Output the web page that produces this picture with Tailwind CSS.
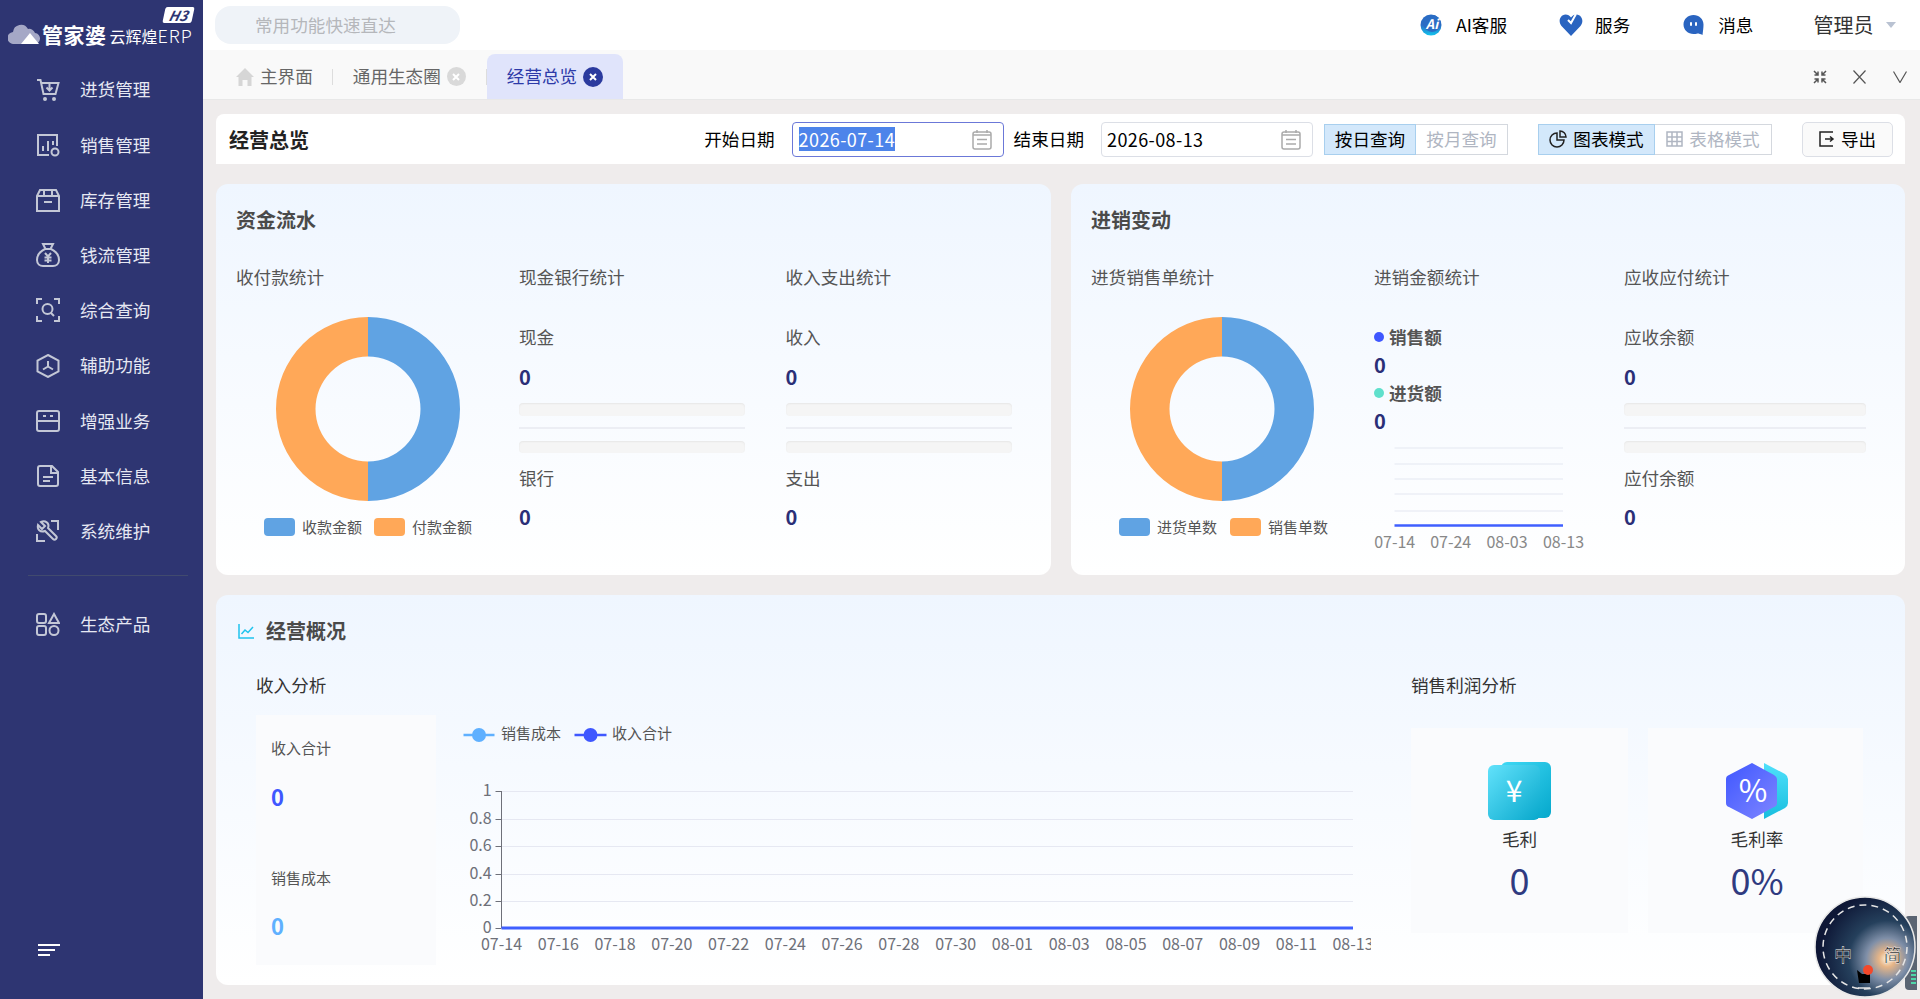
<!DOCTYPE html>
<html lang="zh-CN">

<head>
  <meta charset="UTF-8">
  <meta name="viewport" content="width=device-width, initial-scale=1.0">
  <title>经营总览</title>
  <script src="https://cdn.jsdelivr.net/npm/@tailwindcss/browser@4"></script>
</head>

<body class="h-[999px] overflow-hidden bg-[#efecec] font-['Noto_Sans_CJK_SC','Liberation_Sans',sans-serif] text-[17.6px] text-[#333]">
  <div class="relative flex h-[999px]">

    <!-- Sidebar -->
    <aside class="flex w-[203px] shrink-0 flex-col bg-[#2e3572] text-[#e6e8f2]">
      <!-- Logo -->
      <div class="relative h-[62px]">
        <div class="absolute left-[164px] top-[7px] flex h-[16px] w-[29px] -skew-x-12 items-center justify-center rounded-[2px] bg-white text-[14px] font-bold italic leading-none text-[#2e3572]">H3</div>
        <div class="flex items-center pl-[8px] pt-[22px]">
          <svg class="h-[20px] w-[32px]" viewBox="0 0 32 20"><path d="M6 20a6 6 0 0 1-1-12 8 8 0 0 1 15-3 6 6 0 0 1 7 4 5.500 5.500 0 0 1-1 11z" fill="#a5a8c6"/><path d="M13 20 22 9l9 11z" fill="#fff"/></svg>
          <span class="ml-[2px] text-[21px] font-bold leading-[22px] tracking-[0.5px] text-white">管家婆</span>
          <span class="ml-[3px] mt-[4px] whitespace-nowrap text-[16px] leading-[18px] text-white">云辉煌<span class="text-[18px] font-light tracking-[1px]">ERP</span></span>
        </div>
      </div>

      <!-- Menu -->
      <nav>
        <a class="flex h-[55.2px] items-center pl-[36px]">
          <svg class="h-[24px] w-[24px] fill-none stroke-[#c3c7d6] stroke-2" viewBox="0 0 24 24"><path d="M1 2h3.500l3 14h12l3-11H5"/><path d="M13.500 6v6m-3-2.500 3 3 3-3"/><circle cx="9" cy="21" r="1" /><circle cx="18" cy="21" r="1" /></svg>
          <span class="ml-[20px]">进货管理</span>
        </a>
        <a class="flex h-[55.2px] items-center pl-[36px]">
          <svg class="h-[24px] w-[24px] fill-none stroke-[#c3c7d6] stroke-2" viewBox="0 0 24 24"><path d="M21 13V2H2v20h11"/><path d="M7 13v5M12 8v10M17 8v4"/><circle cx="19" cy="19" r="3.500"/></svg>
          <span class="ml-[20px]">销售管理</span>
        </a>
        <a class="flex h-[55.2px] items-center pl-[36px]">
          <svg class="h-[24px] w-[24px] fill-none stroke-[#c3c7d6] stroke-2" viewBox="0 0 24 24"><path d="M1 8l3-6h16l3 6v15H1z"/><path d="M1 8h22M8 2v6M16 2v6M8 14h8"/></svg>
          <span class="ml-[20px]">库存管理</span>
        </a>
        <a class="flex h-[55.2px] items-center pl-[36px]">
          <svg class="h-[24px] w-[24px] fill-none stroke-[#c3c7d6] stroke-2" viewBox="0 0 24 24"><path d="M7 1h10l-2.500 5h-5z"/><path d="M9 6c-5 2.500-8 7-8 11 0 4 3 6 6 6h10c3 0 6-2 6-6 0-4-3-8.500-8-11"/><path d="M9 10l3 3.500 3-3.500M12 13.500V20M8.500 14.500h7M8.500 17.500h7"/></svg>
          <span class="ml-[20px]">钱流管理</span>
        </a>
        <a class="flex h-[55.2px] items-center pl-[36px]">
          <svg class="h-[24px] w-[24px] fill-none stroke-[#c3c7d6] stroke-2" viewBox="0 0 24 24"><path d="M6 1H1v5M18 1h5v5M6 23H1v-5M18 23h5v-5"/><circle cx="11.500" cy="11" r="5"/><path d="M15 15l3 3"/></svg>
          <span class="ml-[20px]">综合查询</span>
        </a>
        <a class="flex h-[55.2px] items-center pl-[36px]">
          <svg class="h-[24px] w-[24px] fill-none stroke-[#c3c7d6] stroke-2" viewBox="0 0 24 24"><path d="M12 1l10.500 5.500v11L12 23 1.500 17.500v-11z"/><path d="M12 7v5.500M12 12.500l-5 3M12 12.500l5 3"/></svg>
          <span class="ml-[20px]">辅助功能</span>
        </a>
        <a class="flex h-[55.2px] items-center pl-[36px]">
          <svg class="h-[24px] w-[24px] fill-none stroke-[#c3c7d6] stroke-2" viewBox="0 0 24 24"><rect x="1" y="2" width="22" height="20" rx="2"/><path d="M1 12h22M7 7h3M14 7h3"/></svg>
          <span class="ml-[20px]">增强业务</span>
        </a>
        <a class="flex h-[55.2px] items-center pl-[36px]">
          <svg class="h-[24px] w-[24px] fill-none stroke-[#c3c7d6] stroke-2" viewBox="0 0 24 24"><path d="M4 2h12l6 6v12a2 2 0 0 1-2 2H4a2 2 0 0 1-2-2V4a2 2 0 0 1 2-2z"/><path d="M15 2v7h7M7 13h10M7 17h7"/></svg>
          <span class="ml-[20px]">基本信息</span>
        </a>
        <a class="flex h-[55.2px] items-center pl-[36px]">
          <svg class="h-[24px] w-[24px] fill-none stroke-[#c3c7d6] stroke-2" viewBox="0 0 24 24"><path d="M5 3l4 4-3 3-4-4c-1 4 2 8 7 6l8 8c2 2 5-1 3-3l-8-8c2-5-3-8-7-6z"/><path d="M15 2h7v9M1 15v7h8"/></svg>
          <span class="ml-[20px]">系统维护</span>
        </a>
      </nav>
      <div class="ml-[28px] mt-[16px] h-px w-[160px] bg-[#414a6e]"></div>
      <a class="mt-[21px] flex h-[55px] items-center pl-[36px]">
        <svg class="h-[24px] w-[24px] fill-none stroke-[#c3c7d6] stroke-2" viewBox="0 0 24 24"><rect x="1" y="2" width="9" height="9" rx="2"/><rect x="1" y="14" width="9" height="9" rx="2"/><path d="M18 2l5 9H13z"/><circle cx="18" cy="18.500" r="4.500"/></svg>
        <span class="ml-[20px]">生态产品</span>
      </a>
      <div class="ml-[38px] mt-[292px] flex flex-col gap-[3px]">
        <div class="h-[2px] w-[22px] bg-white"></div>
        <div class="h-[2px] w-[17px] bg-white"></div>
        <div class="h-[2px] w-[12px] bg-white"></div>
      </div>
    </aside>

    <div class="flex min-w-0 flex-1 flex-col">
      <!-- Top header -->
      <header class="flex h-[50px] shrink-0 items-center bg-white pl-[12px] text-black">
        <div class="flex h-[38px] w-[245px] items-center rounded-[16px] bg-[#eff3f8] pl-[40px] text-[#b5b7bb]">常用功能快速直达</div>
        <div class="ml-[960px] flex items-center">
          <svg class="h-[24px] w-[22px]" viewBox="0 0 22 24">
            <defs><linearGradient id="aiRing" x1="0" y1="0" x2="0" y2="1"><stop offset="0.5" stop-color="#2a6cc4"/><stop offset="1" stop-color="#12c4ee"/></linearGradient></defs>
            <circle cx="11" cy="12" r="10.500" fill="url(#aiRing)"/><circle cx="12" cy="10.500" r="8.500" fill="#2a6cc4"/>
            <text x="12" y="15.500" text-anchor="middle" font-size="13" font-weight="700" font-style="italic" fill="#fff">Ai</text>
          </svg>
          <span class="ml-[14px]">AI客服</span>
          <svg class="ml-[52px] h-[22px] w-[24px]" viewBox="0 0 24 22"><path d="M12 22 2.500 12C-1 8 .5 1 6.500 .5c2.500 0 4 1 5.500 3C13.500 1.500 15 .5 17.500 .5c6 .5 7.500 7.500 4 11.500z" fill="#2a64c0"/><path d="M9 6l3 3 5-9" fill="none" stroke="#fff" stroke-width="2"/></svg>
          <span class="ml-[12px]">服务</span>
          <svg class="ml-[53px] h-[22px] w-[21px]" viewBox="0 0 21 22"><path d="M10.500 1C16 1 20.500 5 20.500 10.500c0 3-.5 7-1 10.500-2-1-3.500-1.500-5-1.500-1.300.5-2.600.5-4 .5C5 20 .5 16 .5 10.500.5 5 5 1 10.500 1z" fill="#2a64c0"/><rect x="7" y="8" width="2" height="4" rx="1" fill="#fff"/><rect x="12" y="8" width="2" height="4" rx="1" fill="#fff"/></svg>
          <span class="ml-[14px]">消息</span>
          <span class="ml-[60px] text-[20px] leading-[24px] text-[#333]">管理员</span>
          <span class="ml-[13px] h-0 w-0 border-x-[5px] border-t-[6px] border-x-transparent border-t-[#b9c2d2]"></span>
        </div>
      </header>

      <!-- Tabs -->
      <div class="flex h-[50px] shrink-0 items-end border-b border-[#e8e8e8] bg-[#f9f9f9] pl-[33px] text-[#666]">
        <div class="flex h-[45px] items-center">
          <svg class="h-[18px] w-[18px] fill-[#d6d6d6]" viewBox="0 0 18 18"><path d="M9 0l9 9h-2.500v9h-4v-6h-5v6h-4V9H0z"/></svg>
          <span class="ml-[6px]">主界面</span>
          <span class="ml-[19px] h-[16px] w-px bg-[#dddddd]"></span>
          <span class="ml-[20px]">通用生态圈</span>
          <span class="ml-[6px] flex h-[19px] w-[19px] items-center justify-center rounded-full bg-[#d9d9d9]">
            <svg class="h-[8px] w-[8px] stroke-white stroke-2" viewBox="0 0 8 8"><path d="M1 1l6 6M7 1 1 7"/></svg>
          </span>
          <span class="ml-[20px] h-[16px] w-px bg-[#dddddd]"></span>
        </div>
        <div class="flex h-[45px] w-[136px] items-center rounded-t-lg bg-[#e0e4fb] pl-[20px] text-[#2d3aa8]">
          <span>经营总览</span>
          <span class="ml-[6px] flex h-[20px] w-[20px] items-center justify-center rounded-full bg-[#2b3a9e]">
            <svg class="h-[8px] w-[8px] stroke-white stroke-2" viewBox="0 0 8 8"><path d="M1 1l6 6M7 1 1 7"/></svg>
          </span>
        </div>
        <div class="ml-auto flex h-[45px] items-center pr-[13px]">
          <svg class="h-[14px] w-[14px] fill-none stroke-[#555] stroke-[1.500]" viewBox="0 0 14 14"><path d="M1 1l3.500 3.500M13 1 9.500 4.500M1 13l3.500-3.500M13 13 9.500 9.500M5 1.500V5H1.500M9 1.500V5h3.500M5 12.500V9H1.500M9 12.500V9h3.500"/></svg>
          <svg class="ml-[26px] h-[14px] w-[13px] fill-none stroke-[#555] stroke-[1.200]" viewBox="0 0 13 14"><path d="M.5.500l12 13M12.500.500l-12 13"/></svg>
          <svg class="ml-[27px] h-[12px] w-[14px] fill-none stroke-[#555] stroke-[1.200]" viewBox="0 0 14 12"><path d="M.5.500 7 11.500 13.500.500"/></svg>
        </div>
      </div>

      <!-- Page content -->
      <main class="flex min-h-0 flex-1 flex-col pl-[13px] pr-[15px] pt-[14px]">
        <!-- Toolbar -->
        <div class="flex h-[50px] shrink-0 items-center rounded-t-lg bg-white pl-[13px] pr-[12px] text-black">
          <h1 class="pt-[2px] text-[20px] font-bold text-[#222]">经营总览</h1>
          <span class="ml-auto">开始日期</span>
          <div class="ml-[17px] flex h-[35px] w-[212px] items-center justify-between rounded-[4px] border border-[#6b78d8] pl-[6px] pr-[11px]">
            <span class="bg-[#4d84ea] text-[18px] leading-[24px] tracking-[0.4px] text-white">2026-07-14</span>
            <svg class="h-[21px] w-[20px] fill-none stroke-[#aaa] stroke-[1.500]" viewBox="0 0 20 21"><rect x="1" y="3" width="18" height="17" rx="2"/><path d="M5 1v3M15 1v3M1 6h18M5 10.500h10M5 15h10"/></svg>
          </div>
          <span class="ml-[10px]">结束日期</span>
          <div class="ml-[17px] flex h-[35px] w-[212px] items-center justify-between rounded-[4px] border border-[#dcdfe6] pl-[5px] pr-[11px]">
            <span class="text-[18px] tracking-[0.4px]">2026-08-13</span>
            <svg class="h-[21px] w-[20px] fill-none stroke-[#aaa] stroke-[1.500]" viewBox="0 0 20 21"><rect x="1" y="3" width="18" height="17" rx="2"/><path d="M5 1v3M15 1v3M1 6h18M5 10.500h10M5 15h10"/></svg>
          </div>
          <div class="ml-[11px] flex h-[31px]">
            <span class="flex w-[92px] items-center justify-center border border-[#a8cfee] bg-[#d3e8fb]">按日查询</span>
            <span class="flex w-[92px] items-center justify-center border border-l-0 border-[#d4d8de] text-[#b0b6c2]">按月查询</span>
          </div>
          <div class="ml-[30px] flex h-[31px]">
            <span class="flex w-[117px] items-center justify-center gap-[6px] border border-[#a8cfee] bg-[#d3e8fb]">
              <svg class="h-[18px] w-[18px] fill-none stroke-[#222] stroke-[1.500]" viewBox="0 0 18 18"><path d="M8 3a7 7 0 1 0 7 7H8z"/><path d="M11 1a6 6 0 0 1 6 6h-6z"/></svg>
              图表模式
            </span>
            <span class="flex w-[117px] items-center justify-center gap-[6px] border border-l-0 border-[#d4d8de] text-[#b0b6c2]">
              <svg class="h-[16px] w-[17px] fill-none stroke-[#b0b6c2] stroke-[1.500]" viewBox="0 0 17 16"><path d="M1 1h15v14H1zM1 6h15M1 10.500h15M6 1v14M11 1v14"/></svg>
              表格模式
            </span>
          </div>
          <div class="ml-[30px] flex h-[35px] w-[91px] items-center justify-center gap-[6px] rounded-[5px] border border-[#dcdfe6] bg-[#fafafa]">
            <svg class="h-[16px] w-[16px] fill-none stroke-[#222] stroke-[1.500]" viewBox="0 0 16 16"><path d="M14 1H1v14h13M6 8h8M11 5.500 14 8l-3 2.500"/></svg>
            导出
          </div>
        </div>

        <!-- Top cards -->
        <div class="mt-[20px] flex h-[391px] shrink-0 gap-[20px]">
          <section class="h-full w-[835px] rounded-xl bg-gradient-to-b from-[#eff6ff] to-white pl-[20px] pt-[24px] text-[#555]">
            <h2 class="text-[20px] font-bold leading-[24px] text-[#4a4a4a]">资金流水</h2>
            <div class="mt-[33px] grid grid-cols-[283px_266.500px_226px]">
              <div>
                <div class="leading-[24px]">收付款统计</div>
                <svg class="ml-[40px] mt-[28px] block h-[184px] w-[184px]" viewBox="0 0 184 184"><path d="M92 0a92 92 0 0 1 0 184v-39.500a52.500 52.500 0 0 0 0-105z" fill="#60a3e3"/><path d="M92 0a92 92 0 0 0 0 184v-39.500a52.500 52.500 0 0 1 0-105z" fill="#ffa858"/></svg>
                <div class="ml-[28px] mt-[17px] flex items-center text-[15px] leading-[18px]">
                  <span class="h-[18px] w-[31px] rounded-[4px] bg-[#60a3e3]"></span>
                  <span class="ml-[7px]">收款金额</span>
                  <span class="ml-[12px] h-[18px] w-[31px] rounded-[4px] bg-[#ffa858]"></span>
                  <span class="ml-[7px]">付款金额</span>
                </div>
              </div>
              <div>
                <div class="leading-[24px]">现金银行统计</div>
                <div class="mt-[36px] leading-[24px]">现金</div>
                <div class="mt-[16px] text-[20px] font-bold leading-[24px] text-[#2b2f77]">0</div>
                <div class="mt-[14px] h-[13px] w-[226px] rounded-[4px] bg-[#f5f5f5] shadow-[inset_0_1px_2px_rgba(0,0,0,0.06)]"></div>
                <div class="mt-[11px] h-[2px] w-[226px] bg-[#eceef4]"></div>
                <div class="mt-[12px] h-[12px] w-[226px] rounded-[4px] bg-[#f5f5f5] shadow-[inset_0_1px_2px_rgba(0,0,0,0.06)]"></div>
                <div class="mt-[13px] leading-[24px]">银行</div>
                <div class="mt-[15px] text-[20px] font-bold leading-[24px] text-[#2b2f77]">0</div>
              </div>
              <div>
                <div class="leading-[24px]">收入支出统计</div>
                <div class="mt-[36px] leading-[24px]">收入</div>
                <div class="mt-[16px] text-[20px] font-bold leading-[24px] text-[#2b2f77]">0</div>
                <div class="mt-[14px] h-[13px] w-[226px] rounded-[4px] bg-[#f5f5f5] shadow-[inset_0_1px_2px_rgba(0,0,0,0.06)]"></div>
                <div class="mt-[11px] h-[2px] w-[226px] bg-[#eceef4]"></div>
                <div class="mt-[12px] h-[12px] w-[226px] rounded-[4px] bg-[#f5f5f5] shadow-[inset_0_1px_2px_rgba(0,0,0,0.06)]"></div>
                <div class="mt-[13px] leading-[24px]">支出</div>
                <div class="mt-[15px] text-[20px] font-bold leading-[24px] text-[#2b2f77]">0</div>
              </div>
            </div>
          </section>

          <section class="h-full w-[834px] rounded-xl bg-gradient-to-b from-[#eff6ff] to-white pl-[20px] pt-[24px] text-[#555]">
            <h2 class="text-[20px] font-bold leading-[24px] text-[#4a4a4a]">进销变动</h2>
            <div class="mt-[33px] grid grid-cols-[283px_250px_242px]">
              <div>
                <div class="leading-[24px]">进货销售单统计</div>
                <svg class="ml-[39px] mt-[28px] block h-[184px] w-[184px]" viewBox="0 0 184 184"><path d="M92 0a92 92 0 0 1 0 184v-39.500a52.500 52.500 0 0 0 0-105z" fill="#60a3e3"/><path d="M92 0a92 92 0 0 0 0 184v-39.500a52.500 52.500 0 0 1 0-105z" fill="#ffa858"/></svg>
                <div class="ml-[28px] mt-[17px] flex items-center text-[15px] leading-[18px]">
                  <span class="h-[18px] w-[31px] rounded-[4px] bg-[#60a3e3]"></span>
                  <span class="ml-[7px]">进货单数</span>
                  <span class="ml-[13px] h-[18px] w-[31px] rounded-[4px] bg-[#ffa858]"></span>
                  <span class="ml-[7px]">销售单数</span>
                </div>
              </div>
              <div>
                <div class="leading-[24px]">进销金额统计</div>
                <div class="mt-[36px] flex items-center font-bold leading-[24px]"><span class="h-[10px] w-[10px] rounded-full bg-[#3f57ff]"></span><span class="ml-[5px]">销售额</span></div>
                <div class="mt-[4px] text-[20px] font-bold leading-[24px] text-[#2b2f77]">0</div>
                <div class="mt-[4px] flex items-center font-bold leading-[24px]"><span class="h-[10px] w-[10px] rounded-full bg-[#5fe0cc]"></span><span class="ml-[5px]">进货额</span></div>
                <div class="mt-[4px] text-[20px] font-bold leading-[24px] text-[#2b2f77]">0</div>
                <svg class="mt-[7px] block h-[115px] w-[242px]" viewBox="0 0 242 115">
                  <path d="M20.500 8H189M20.500 24H189M20.500 39H189M20.500 54H189M20.500 71H189" stroke="#eceef6" stroke-width="1.500"/>
                  <path d="M20.500 85.500H189" stroke="#3f5fff" stroke-width="2.500"/>
                  <g font-size="16" fill="#888" text-anchor="middle">
                    <text x="20.700" y="108">07-14</text>
                    <text x="76.700" y="108">07-24</text>
                    <text x="133" y="108">08-03</text>
                    <text x="189.500" y="108">08-13</text>
                  </g>
                </svg>
              </div>
              <div>
                <div class="leading-[24px]">应收应付统计</div>
                <div class="mt-[36px] leading-[24px]">应收余额</div>
                <div class="mt-[16px] text-[20px] font-bold leading-[24px] text-[#2b2f77]">0</div>
                <div class="mt-[14px] h-[13px] w-[242px] rounded-[4px] bg-[#f5f5f5] shadow-[inset_0_1px_2px_rgba(0,0,0,0.06)]"></div>
                <div class="mt-[11px] h-[2px] w-[242px] bg-[#eceef4]"></div>
                <div class="mt-[12px] h-[12px] w-[242px] rounded-[4px] bg-[#f5f5f5] shadow-[inset_0_1px_2px_rgba(0,0,0,0.06)]"></div>
                <div class="mt-[13px] leading-[24px]">应付余额</div>
                <div class="mt-[15px] text-[20px] font-bold leading-[24px] text-[#2b2f77]">0</div>
              </div>
            </div>
          </section>
        </div>

        <!-- Business overview -->
        <section class="mt-[20px] h-[390px] shrink-0 rounded-xl bg-gradient-to-b from-[#eff6ff] to-white pl-[22px] pt-[24px] text-[#555]">
          <div class="flex h-[24px] items-center">
            <svg class="h-[15px] w-[16px] fill-none stroke-[#1fc4ee] stroke-[1.500]" viewBox="0 0 16 15"><path d="M1 0v14h15M3.500 10l3.500-4 3 2.500L15 3"/></svg>
            <h2 class="ml-[12px] text-[20px] font-bold leading-[24px] text-[#4a4a4a]">经营概况</h2>
          </div>
          <div class="ml-[18px] mt-[30px] flex">
            <div class="w-[1155px]">
              <div class="leading-[24px] text-[#333]">收入分析</div>
              <div class="mt-[18px] flex">
                <div class="h-[250px] w-[180px] shrink-0 bg-[#fafbfd] pl-[15px] text-[15px]">
                  <div class="mt-[22px] leading-[22px]">收入合计</div>
                  <div class="mt-[25px] text-[22px] font-bold leading-[24px] text-[#3f57ff]">0</div>
                  <div class="mt-[59px] leading-[22px]">销售成本</div>
                  <div class="mt-[24px] text-[22px] font-bold leading-[24px] text-[#5fb0ff]">0</div>
                </div>
                <svg class="mt-px block h-[250px] w-[935px]" viewBox="0 0 935 250">
                  <path d="M27.500 19h31" stroke="#5fb0ff" stroke-width="2.500"/>
                  <circle cx="43" cy="19" r="7" fill="#5fb0ff"/>
                  <path d="M138.500 19h32" stroke="#3f57ff" stroke-width="2.500"/>
                  <circle cx="154.500" cy="19" r="7" fill="#3f57ff"/>
                  <g font-size="15" fill="#555">
                    <text x="65" y="23">销售成本</text>
                    <text x="176" y="23">收入合计</text>
                  </g>
                  <path d="M65.500 75.500H917M65.500 103.500H917M65.500 130.500H917M65.500 158.500H917M65.500 185.500H917" stroke="#e6e8f2"/>
                  <path d="M65.500 75V212M59.500 75.500h6M59.500 103.500h6M59.500 130.500h6M59.500 158.500h6M59.500 185.500h6M59.500 212.500h6" stroke="#6e7079"/>
                  <path d="M65.500 212H917" stroke="#3f5fff" stroke-width="3"/>
                  <g font-size="16" fill="#6e7079" text-anchor="end">
                    <text x="55.600" y="80">1</text>
                    <text x="55.600" y="108">0.8</text>
                    <text x="55.600" y="135">0.6</text>
                    <text x="55.600" y="163">0.4</text>
                    <text x="55.600" y="190">0.2</text>
                    <text x="55.600" y="217">0</text>
                  </g>
                  <g font-size="16" fill="#6e7079" text-anchor="middle">
                    <text x="65.500" y="234">07-14</text>
                    <text x="122.300" y="234">07-16</text>
                    <text x="179" y="234">07-18</text>
                    <text x="235.800" y="234">07-20</text>
                    <text x="292.600" y="234">07-22</text>
                    <text x="349.400" y="234">07-24</text>
                    <text x="406.100" y="234">07-26</text>
                    <text x="462.900" y="234">07-28</text>
                    <text x="519.700" y="234">07-30</text>
                    <text x="576.400" y="234">08-01</text>
                    <text x="633.200" y="234">08-03</text>
                    <text x="690" y="234">08-05</text>
                    <text x="746.700" y="234">08-07</text>
                    <text x="803.500" y="234">08-09</text>
                    <text x="860.300" y="234">08-11</text>
                    <text x="917" y="234">08-13</text>
                  </g>
                </svg>
              </div>
            </div>
            <div>
              <div class="leading-[24px] text-[#333]">销售利润分析</div>
              <div class="mt-[31px] grid grid-cols-[217px_215px] gap-[20px]">
                <div class="flex h-[205px] flex-col items-center bg-[#fafbfd] pt-[34px]">
                  <svg class="h-[58px] w-[63px]" viewBox="0 0 63 58">
                    <defs>
                      <linearGradient id="yenBack" x1="0" y1="0" x2="1" y2="1"><stop offset="0" stop-color="#3fd9f5"/><stop offset="1" stop-color="#06a8cc"/></linearGradient>
                      <linearGradient id="yenFront" x1="0" y1="0" x2="1" y2="1"><stop offset="0" stop-color="#62e2fb"/><stop offset="1" stop-color="#08a8cc"/></linearGradient>
                      <linearGradient id="hexFront" x1="0" y1="0" x2="1" y2="1"><stop offset="0" stop-color="#3f57ff"/><stop offset="1" stop-color="#7f86ff"/></linearGradient>
                      <linearGradient id="hexBack" x1="0" y1="0" x2="0" y2="1"><stop offset="0" stop-color="#4fe0fb"/><stop offset="1" stop-color="#18bede"/></linearGradient>
                    </defs>
                    <rect x="13" y="0" width="50" height="56" rx="6" fill="url(#yenBack)"/>
                    <rect x="0" y="3" width="52" height="55" rx="6" fill="url(#yenFront)"/>
                    <text x="26" y="40" text-anchor="middle" font-size="30" fill="#fff">¥</text>
                  </svg>
                  <div class="mt-[7px] leading-[24px] text-[#333]">毛利</div>
                  <div class="mt-[8px] text-[36px] leading-[40px] text-[#2f3a80]">0</div>
                </div>
                <div class="flex h-[205px] flex-col items-center bg-[#fafbfd] pl-[3px] pt-[35px]">
                  <svg class="h-[56px] w-[62px]" viewBox="0 0 62 56">
                    <path d="M38 0 59 11q3 2 3 5v24q0 3-3 5L38 56z" fill="url(#hexBack)"/>
                    <path d="M26 0 48 12q3 2 3 4v24q0 3-3 4L26 56 3 44q-3-1-3-4V16q0-3 3-4z" fill="url(#hexFront)"/>
                    <text x="27" y="39" text-anchor="middle" font-size="31" fill="#fff">%</text>
                  </svg>
                  <div class="mt-[8px] leading-[24px] text-[#333]">毛利率</div>
                  <div class="mt-[8px] text-[36px] leading-[40px] text-[#2f3a80]">0%</div>
                </div>
              </div>
            </div>
          </div>
        </section>
      </main>
    </div>

    <!-- Floating widget -->
    <div class="absolute left-[1905px] top-[916px] h-[74px] w-[12px] rounded-l-[4px] bg-[#5a6472]">
      <div class="absolute bottom-[6px] left-[6px] h-[16px] w-[5px] bg-[repeating-linear-gradient(0deg,#4fd6a8_0_2px,transparent_2px_4px)]"></div>
    </div>
    <svg class="absolute left-[1814px] top-[896px] h-[102px] w-[102px]" viewBox="0 0 102 102">
      <defs>
        <radialGradient id="nebula" cx="0.72" cy="0.62" r="0.8">
          <stop offset="0" stop-color="#fff3df"/>
          <stop offset="0.1" stop-color="#e6b587"/>
          <stop offset="0.26" stop-color="#7f8fa8"/>
          <stop offset="0.48" stop-color="#25405c"/>
          <stop offset="0.85" stop-color="#0e1736"/>
        </radialGradient>
      </defs>
      <circle cx="51" cy="51" r="50" fill="url(#nebula)" stroke="#e8e8e8" stroke-width="1.500"/>
      <circle cx="51" cy="51" r="42" fill="none" stroke="#e6e6e6" stroke-width="1.500" stroke-dasharray="7 5"/>
      <g font-size="18" fill="#111" stroke="#fff" stroke-width="0.400" text-anchor="middle">
        <text x="29" y="66">中</text>
        <text x="78.500" y="66">简</text>
      </g>
      <path d="M43 74l5 4h8v9H45z" fill="#000"/>
      <circle cx="54" cy="74" r="5" fill="#f4482a"/>
      <path d="M44 92h12" stroke="#e6e6e6" stroke-width="1.500"/>
    </svg>
  </div>
</body>

</html>
